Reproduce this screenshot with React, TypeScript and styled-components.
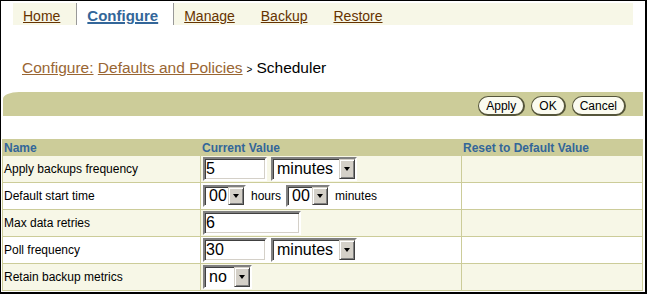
import styled, { createGlobalStyle } from 'styled-components';

const GlobalStyle = createGlobalStyle`
  html, body {
    margin: 0;
    padding: 0;
    background: #fff;
  }
  body {
    font-family: "Liberation Sans", Arial, sans-serif;
  }
`;

type Row = {
  label: string;
  field: JSX.Element;
};

const App = (): JSX.Element => {
  const rows: Row[] = [
    {
      label: 'Apply backups frequency',
      field: (
        <Field>
          <TextInput $w={64} defaultValue='5' />
          <Select $w={86} value='minutes' />
        </Field>
      ),
    },
    {
      label: 'Default start time',
      field: (
        <Field $gap={5}>
          <Select $w={43} $h={22} value='00' />
          <Unit>hours</Unit>
          <Select $w={44} $h={22} value='00' />
          <Unit>minutes</Unit>
        </Field>
      ),
    },
    {
      label: 'Max data retries',
      field: (
        <Field>
          <TextInput $w={98} defaultValue='6' />
        </Field>
      ),
    },
    {
      label: 'Poll frequency',
      field: (
        <Field>
          <TextInput $w={64} defaultValue='30' />
          <Select $w={86} value='minutes' />
        </Field>
      ),
    },
    {
      label: 'Retain backup metrics',
      field: (
        <Field>
          <Select $w={49} value='no' />
        </Field>
      ),
    },
  ];

  return (
    <Frame>
      <GlobalStyle />
      <TabBar>
        <Tab>Home</Tab>
        <Tab $active>Configure</Tab>
        <Tab>Manage</Tab>
        <Tab>Backup</Tab>
        <Tab>Restore</Tab>
      </TabBar>

      <Breadcrumb>
        <Crumb>Configure:</Crumb> <Crumb>Defaults and Policies</Crumb>
        <Sep>&gt;</Sep>Scheduler
      </Breadcrumb>

      <ActionBar>
        <PillButton>Apply</PillButton>
        <PillButton>OK</PillButton>
        <PillButton>Cancel</PillButton>
      </ActionBar>

      <Table>
        <colgroup>
          <col style={{ width: 198 }} />
          <col style={{ width: 261 }} />
          <col />
        </colgroup>
        <thead>
          <tr>
            <HeadCell>Name</HeadCell>
            <HeadCell>Current Value</HeadCell>
            <HeadCell>Reset to Default Value</HeadCell>
          </tr>
        </thead>
        <tbody>
          {rows.map((row, i) => (
            <BodyRow key={row.label} $alt={i % 2 === 0}>
              <LabelCell>{row.label}</LabelCell>
              <ValueCell>{row.field}</ValueCell>
              <ValueCell />
            </BodyRow>
          ))}
        </tbody>
      </Table>
    </Frame>
  );
};

const Select = ({ $w, $h, value }: { $w: number; $h?: number; value: string }) => (
  <SelectBox $w={$w} $h={$h}>
    <SelectValue>{value}</SelectValue>
    <ArrowButton />
  </SelectBox>
);

const Frame = styled.div`
  width: 647px;
  height: 294px;
  box-sizing: border-box;
  border-style: solid;
  border-color: #000;
  border-width: 1px 2px 2px 1px;
  overflow: hidden;
  background: #fff;
`;

const TabBar = styled.nav`
  display: flex;
  height: 22px;
  margin: 2px 12px 0;
  background: #f7f7e7;
`;

const Tab = styled.a<{ $active?: boolean }>`
  display: block;
  padding: 5px 16px 0 10px;
  line-height: 16px;
  font-size: 14px;
  color: #663300;
  text-decoration: underline;
  cursor: pointer;

  ${(p) =>
    p.$active &&
    `
    background: #fff;
    color: #336699;
    font-weight: bold;
    font-size: 15px;
    padding-right: 15px;
    border-left: 1px solid #999;
    border-right: 1px solid #999;
    text-decoration-thickness: 2px;
  `}
`;

const Breadcrumb = styled.div`
  margin: 34px 0 0 21px;
  font-size: 15.5px;
  line-height: 18px;
  color: #000;
`;

const Crumb = styled.a`
  color: #996633;
  text-decoration: underline;
`;

const Sep = styled.span`
  font-size: 10px;
  margin: 0 4px;
`;

const ActionBar = styled.div`
  display: flex;
  justify-content: flex-end;
  align-items: flex-end;
  gap: 6px;
  height: 24px;
  margin: 13px 2px 0 2px;
  padding-right: 17px;
  background: #cccc99;
  border-top-left-radius: 16px 7px;
`;

const PillButton = styled.button`
  height: 20px;
  padding: 0 7px;
  border-radius: 10px;
  border: 1px solid #55553a;
  border-right-width: 2px;
  border-bottom-width: 2px;
  background: #fbfbf0;
  font-family: "Liberation Sans", Arial, sans-serif;
  font-size: 12px;
  color: #000;
  line-height: 16px;
`;

const Table = styled.table`
  width: 641px;
  margin: 23px 0 0 1px;
  border-collapse: collapse;
  table-layout: fixed;
  border: 1px solid #cccc99;
`;

const HeadCell = styled.th`
  height: 15px;
  padding: 0 1px;
  background: #cccc99;
  color: #336699;
  font-size: 12px;
  line-height: 14px;
  font-weight: bold;
  text-align: left;
  border: 1px solid #cccc99;
`;

const BodyRow = styled.tr<{ $alt: boolean }>`
  background: ${(p) => (p.$alt ? '#f7f7e7' : '#fff')};
`;

const LabelCell = styled.td`
  height: 26px;
  padding: 0 1px;
  font-size: 12px;
  color: #000;
  border: 1px solid #cccc99;
  vertical-align: middle;
`;

const ValueCell = styled.td`
  height: 26px;
  padding: 0 2px;
  border: 1px solid #cccc99;
  vertical-align: middle;
`;

const Field = styled.div<{ $gap?: number }>`
  display: flex;
  align-items: center;
  gap: ${(p) => p.$gap ?? 4}px;
`;

const Unit = styled.span`
  font-size: 12px;
  color: #000;
`;

const TextInput = styled.input<{ $w: number }>`
  box-sizing: border-box;
  width: ${(p) => p.$w}px;
  height: 24px;
  margin: 0;
  padding: 0 1px;
  border: 2px solid;
  border-color: #808080 #fff #fff #808080;
  box-shadow: inset 1px 1px 0 #404040, inset -1px -1px 0 #d4d0c8;
  background: #fff;
  font-family: "Liberation Sans", Arial, sans-serif;
  font-size: 16px;
  color: #000;
  outline: none;
`;

const SelectBox = styled.span<{ $w: number; $h?: number }>`
  display: inline-flex;
  align-items: stretch;
  box-sizing: border-box;
  width: ${(p) => p.$w}px;
  height: ${(p) => p.$h ?? 24}px;
  border: 2px solid;
  border-color: #808080 #fff #fff #808080;
  box-shadow: inset 1px 1px 0 #404040;
  background: #fff;
`;

const SelectValue = styled.span`
  flex: 1;
  padding-left: 4px;
  font-size: 16px;
  display: flex;
  align-items: center;
  color: #000;
  overflow: hidden;
`;

const ArrowButton = styled.span`
  width: 16px;
  box-sizing: border-box;
  display: flex;
  align-items: center;
  justify-content: center;
  background: #d4d0c8;
  border: 1px solid;
  border-color: #d4d0c8 #404040 #404040 #d4d0c8;
  box-shadow: inset 1px 1px 0 #fff, inset -1px -1px 0 #808080;

  &::after {
    content: '';
    border-left: 3.5px solid transparent;
    border-right: 3.5px solid transparent;
    border-top: 4px solid #000;
  }
`;

export default App;
